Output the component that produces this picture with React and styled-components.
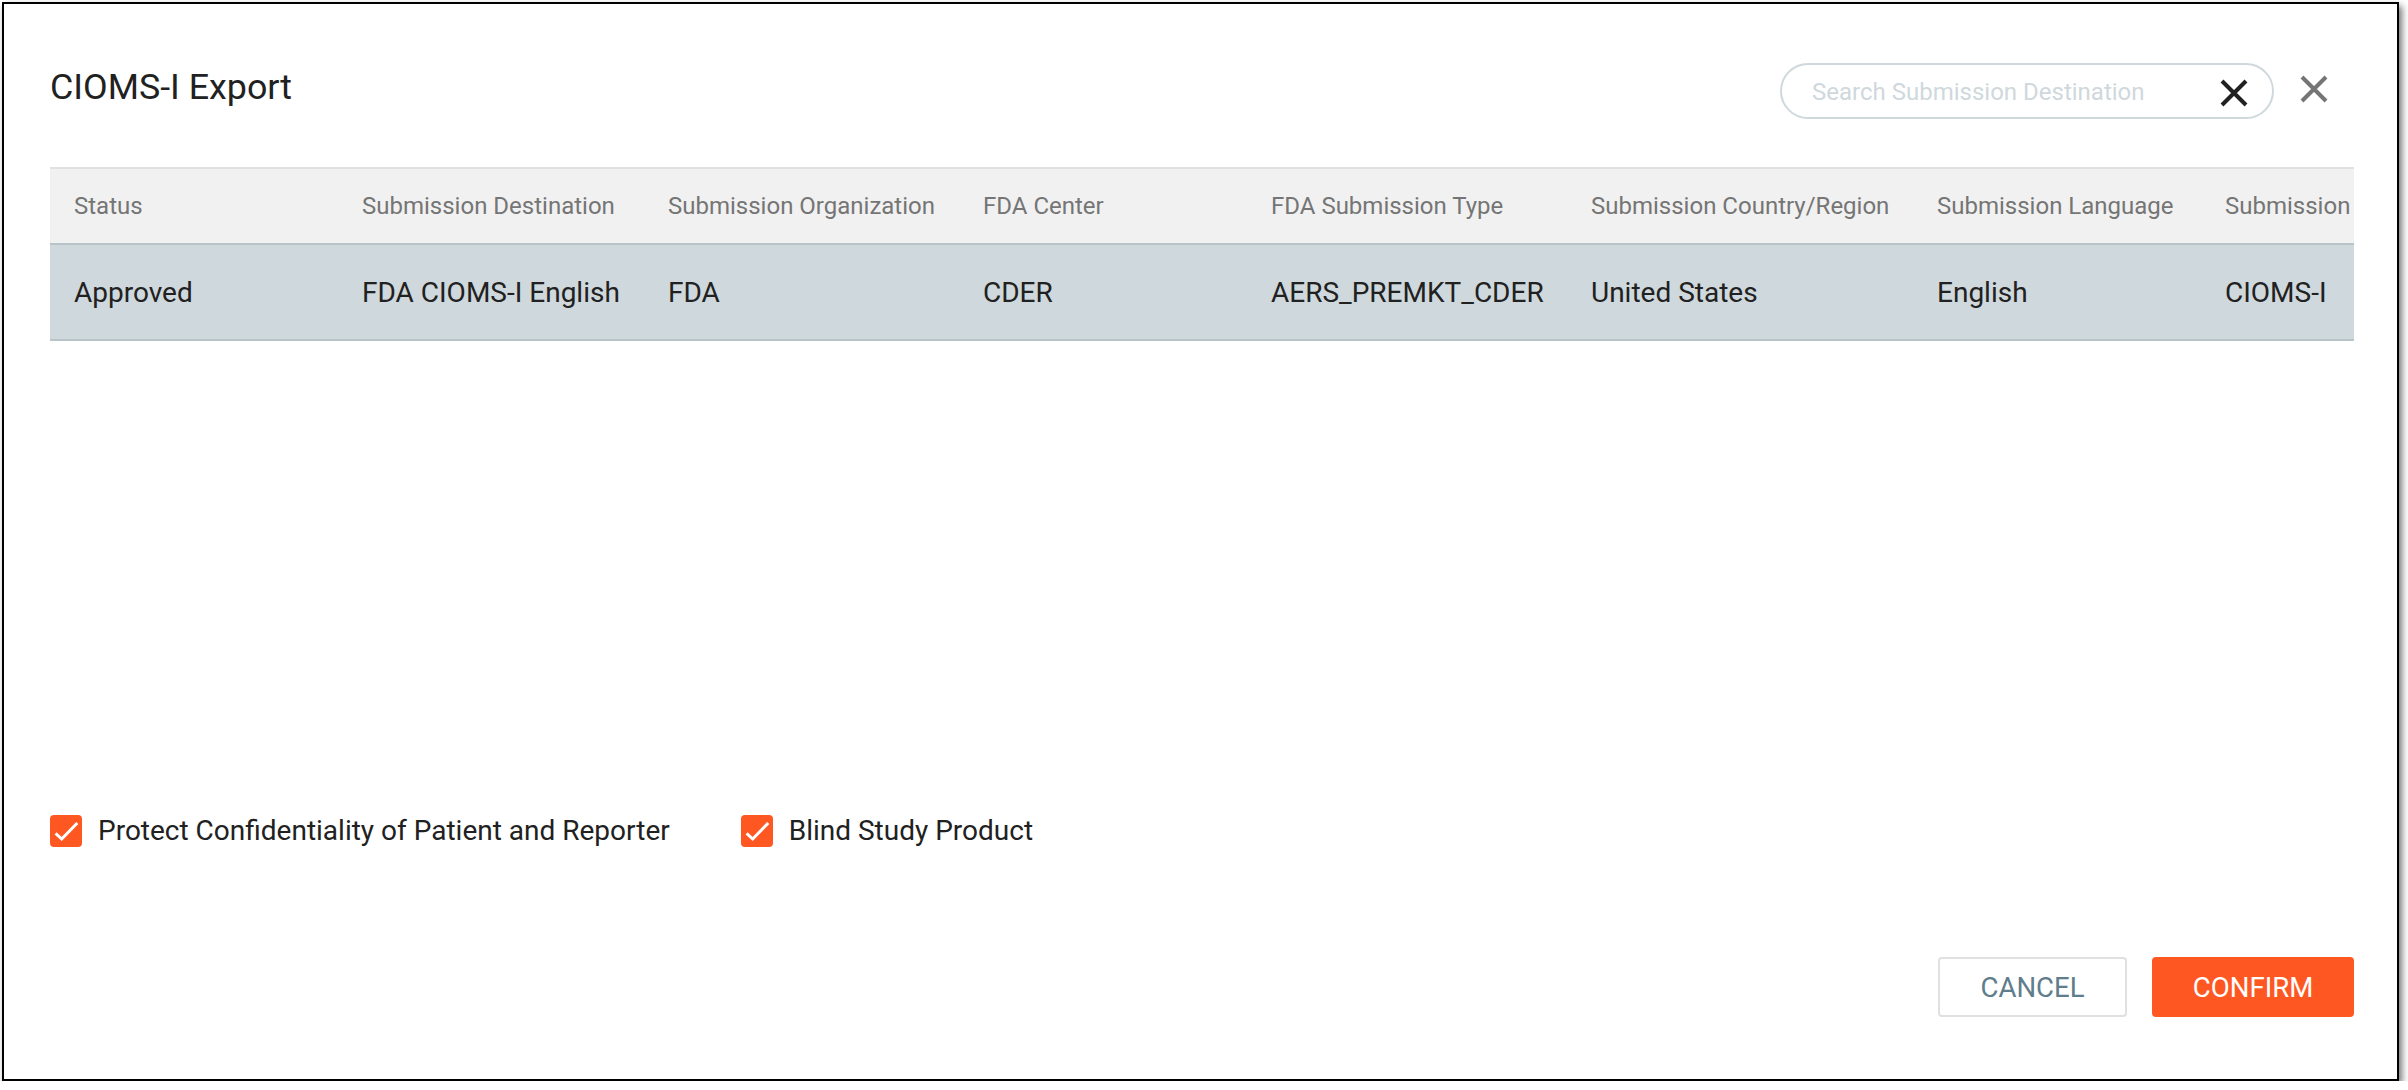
import styled, { createGlobalStyle } from "styled-components";

const GlobalStyle = createGlobalStyle`
  html,
  body {
    margin: 0;
    background-color: #fff;
  }

  * {
    box-sizing: border-box;
  }
`;

const Dialog = styled.div`
  display: flex;
  flex-direction: column;

  width: 2397px;
  height: 1079px;
  margin: 2px 0 0 2px;
  padding: 0 43px 62px 46px;

  border: 2px solid #000;

  font-family: Roboto, "Liberation Sans", sans-serif;

  background-color: #fff;

  box-shadow: 3px 4px 7px rgba(0, 0, 0, 0.55);
`;

const Header = styled.div`
  display: flex;
  flex-direction: row;

  height: 163px;

  align-items: flex-start;
  justify-content: space-between;
`;

const Title = styled.div`
  margin-top: 63px;

  font-size: 35.8px;
  line-height: 40px;
  color: #212121;
`;

const HeaderTools = styled.div`
  display: flex;
  flex-direction: row;

  margin-top: 59px;
  margin-right: 26px;

  align-items: flex-start;
  gap: 26px;
`;

const SearchBox = styled.div`
  display: flex;
  flex-direction: row;

  width: 494px;
  height: 56px;

  align-items: center;
  justify-content: space-between;

  padding: 0 24px 0 30px;

  border: 2px solid #cfd8dc;
  border-radius: 28px;
`;

const SearchInput = styled.input`
  width: 380px;
  margin-top: 2px;
  padding: 0;

  border: none;
  outline: none;

  font-family: inherit;
  font-size: 24px;

  background-color: transparent;

  &::placeholder {
    color: #cfd8dc;
    opacity: 1;
  }
`;

const Cross = styled.svg`
  display: block;
  flex-shrink: 0;

  width: 28px;
  height: 28px;
  margin-top: ${(props) => props.$top || 0}px;

  stroke: ${(props) => props.$color};
  stroke-width: 4;
  fill: none;
`;

const Table = styled.div`
  overflow: hidden;

  width: 100%;
`;

const Row = styled.div`
  display: grid;
  grid-template-columns: 288px 306px 315px 288px 320px 346px 288px 1fr;

  height: ${(props) => props.$height}px;

  align-items: center;

  border-top: ${(props) => props.$borderTop};
  border-bottom: ${(props) => props.$borderBottom};

  background-color: ${(props) => props.$background};
`;

const HeadCell = styled.div`
  overflow: hidden;

  padding-left: 24px;

  white-space: nowrap;
  font-size: 24px;
  color: #757575;
`;

const BodyCell = styled.div`
  overflow: hidden;

  padding-left: 24px;

  white-space: nowrap;
  font-size: 28px;
  color: #212121;
`;

const Options = styled.div`
  display: flex;
  flex-direction: row;

  margin-top: auto;

  align-items: center;
  gap: 71px;
`;

const Option = styled.label`
  display: flex;
  flex-direction: row;

  align-items: center;
  gap: 16px;

  font-size: 28px;
  color: #212121;
`;

const CheckBox = styled.span`
  display: flex;

  width: 32px;
  height: 32px;

  align-items: center;
  justify-content: center;

  border-radius: 4px;

  background-color: #ff5722;

  svg {
    width: 32px;
    height: 32px;

    stroke: #fff;
    stroke-width: 3;
    fill: none;
  }
`;

const Footer = styled.div`
  display: flex;
  flex-direction: row;

  margin-top: 110px;

  justify-content: flex-end;
  gap: 25px;
`;

const Button = styled.button`
  width: ${(props) => props.$width}px;
  height: 60px;
  padding: 0;

  border: 2px solid ${(props) => (props.$primary ? "#ff5722" : "#e0e0e0")};
  border-radius: 4px;

  font-family: inherit;
  font-size: 27.6px;
  color: ${(props) => (props.$primary ? "#fff" : "#607d8b")};

  background-color: ${(props) => (props.$primary ? "#ff5722" : "#fff")};
`;

const columns = [
  ["Status", "Approved"],
  ["Submission Destination", "FDA CIOMS-I English"],
  ["Submission Organization", "FDA"],
  ["FDA Center", "CDER"],
  ["FDA Submission Type", "AERS_PREMKT_CDER"],
  ["Submission Country/Region", "United States"],
  ["Submission Language", "English"],
  ["Submission", "CIOMS-I"],
];

const options = ["Protect Confidentiality of Patient and Reporter", "Blind Study Product"];

function CrossIcon({ color, top }) {
  return (
    <Cross viewBox="0 0 28 28" $color={color} $top={top}>
      <path d="M2 2L26 26M26 2L2 26" />
    </Cross>
  );
}

function App() {
  return (
    <>
      <GlobalStyle />
      <Dialog>
        <Header>
          <Title>CIOMS-I Export</Title>
          <HeaderTools>
            <SearchBox>
              <SearchInput placeholder="Search Submission Destination" />
              <CrossIcon color="#212121" top={4} />
            </SearchBox>
            <CrossIcon color="#757575" top={12} />
          </HeaderTools>
        </Header>

        <Table>
          <Row $height={78} $borderTop="2px solid #e0e0e0" $borderBottom="2px solid #b8c4c8" $background="#f1f1f1">
            {columns.map(([head]) => (
              <HeadCell key={head}>{head}</HeadCell>
            ))}
          </Row>
          <Row $height={96} $borderBottom="2px solid #b8c4c8" $background="#cfd8dc">
            {columns.map(([head, value]) => (
              <BodyCell key={head}>{value}</BodyCell>
            ))}
          </Row>
        </Table>

        <Options>
          {options.map((label) => (
            <Option key={label}>
              <CheckBox>
                <svg viewBox="0 0 32 32">
                  <path d="M5.6 18.3L11.7 24L27.3 8" />
                </svg>
              </CheckBox>
              {label}
            </Option>
          ))}
        </Options>

        <Footer>
          <Button $width={189}>CANCEL</Button>
          <Button $width={202} $primary>
            CONFIRM
          </Button>
        </Footer>
      </Dialog>
    </>
  );
}

export default App;
